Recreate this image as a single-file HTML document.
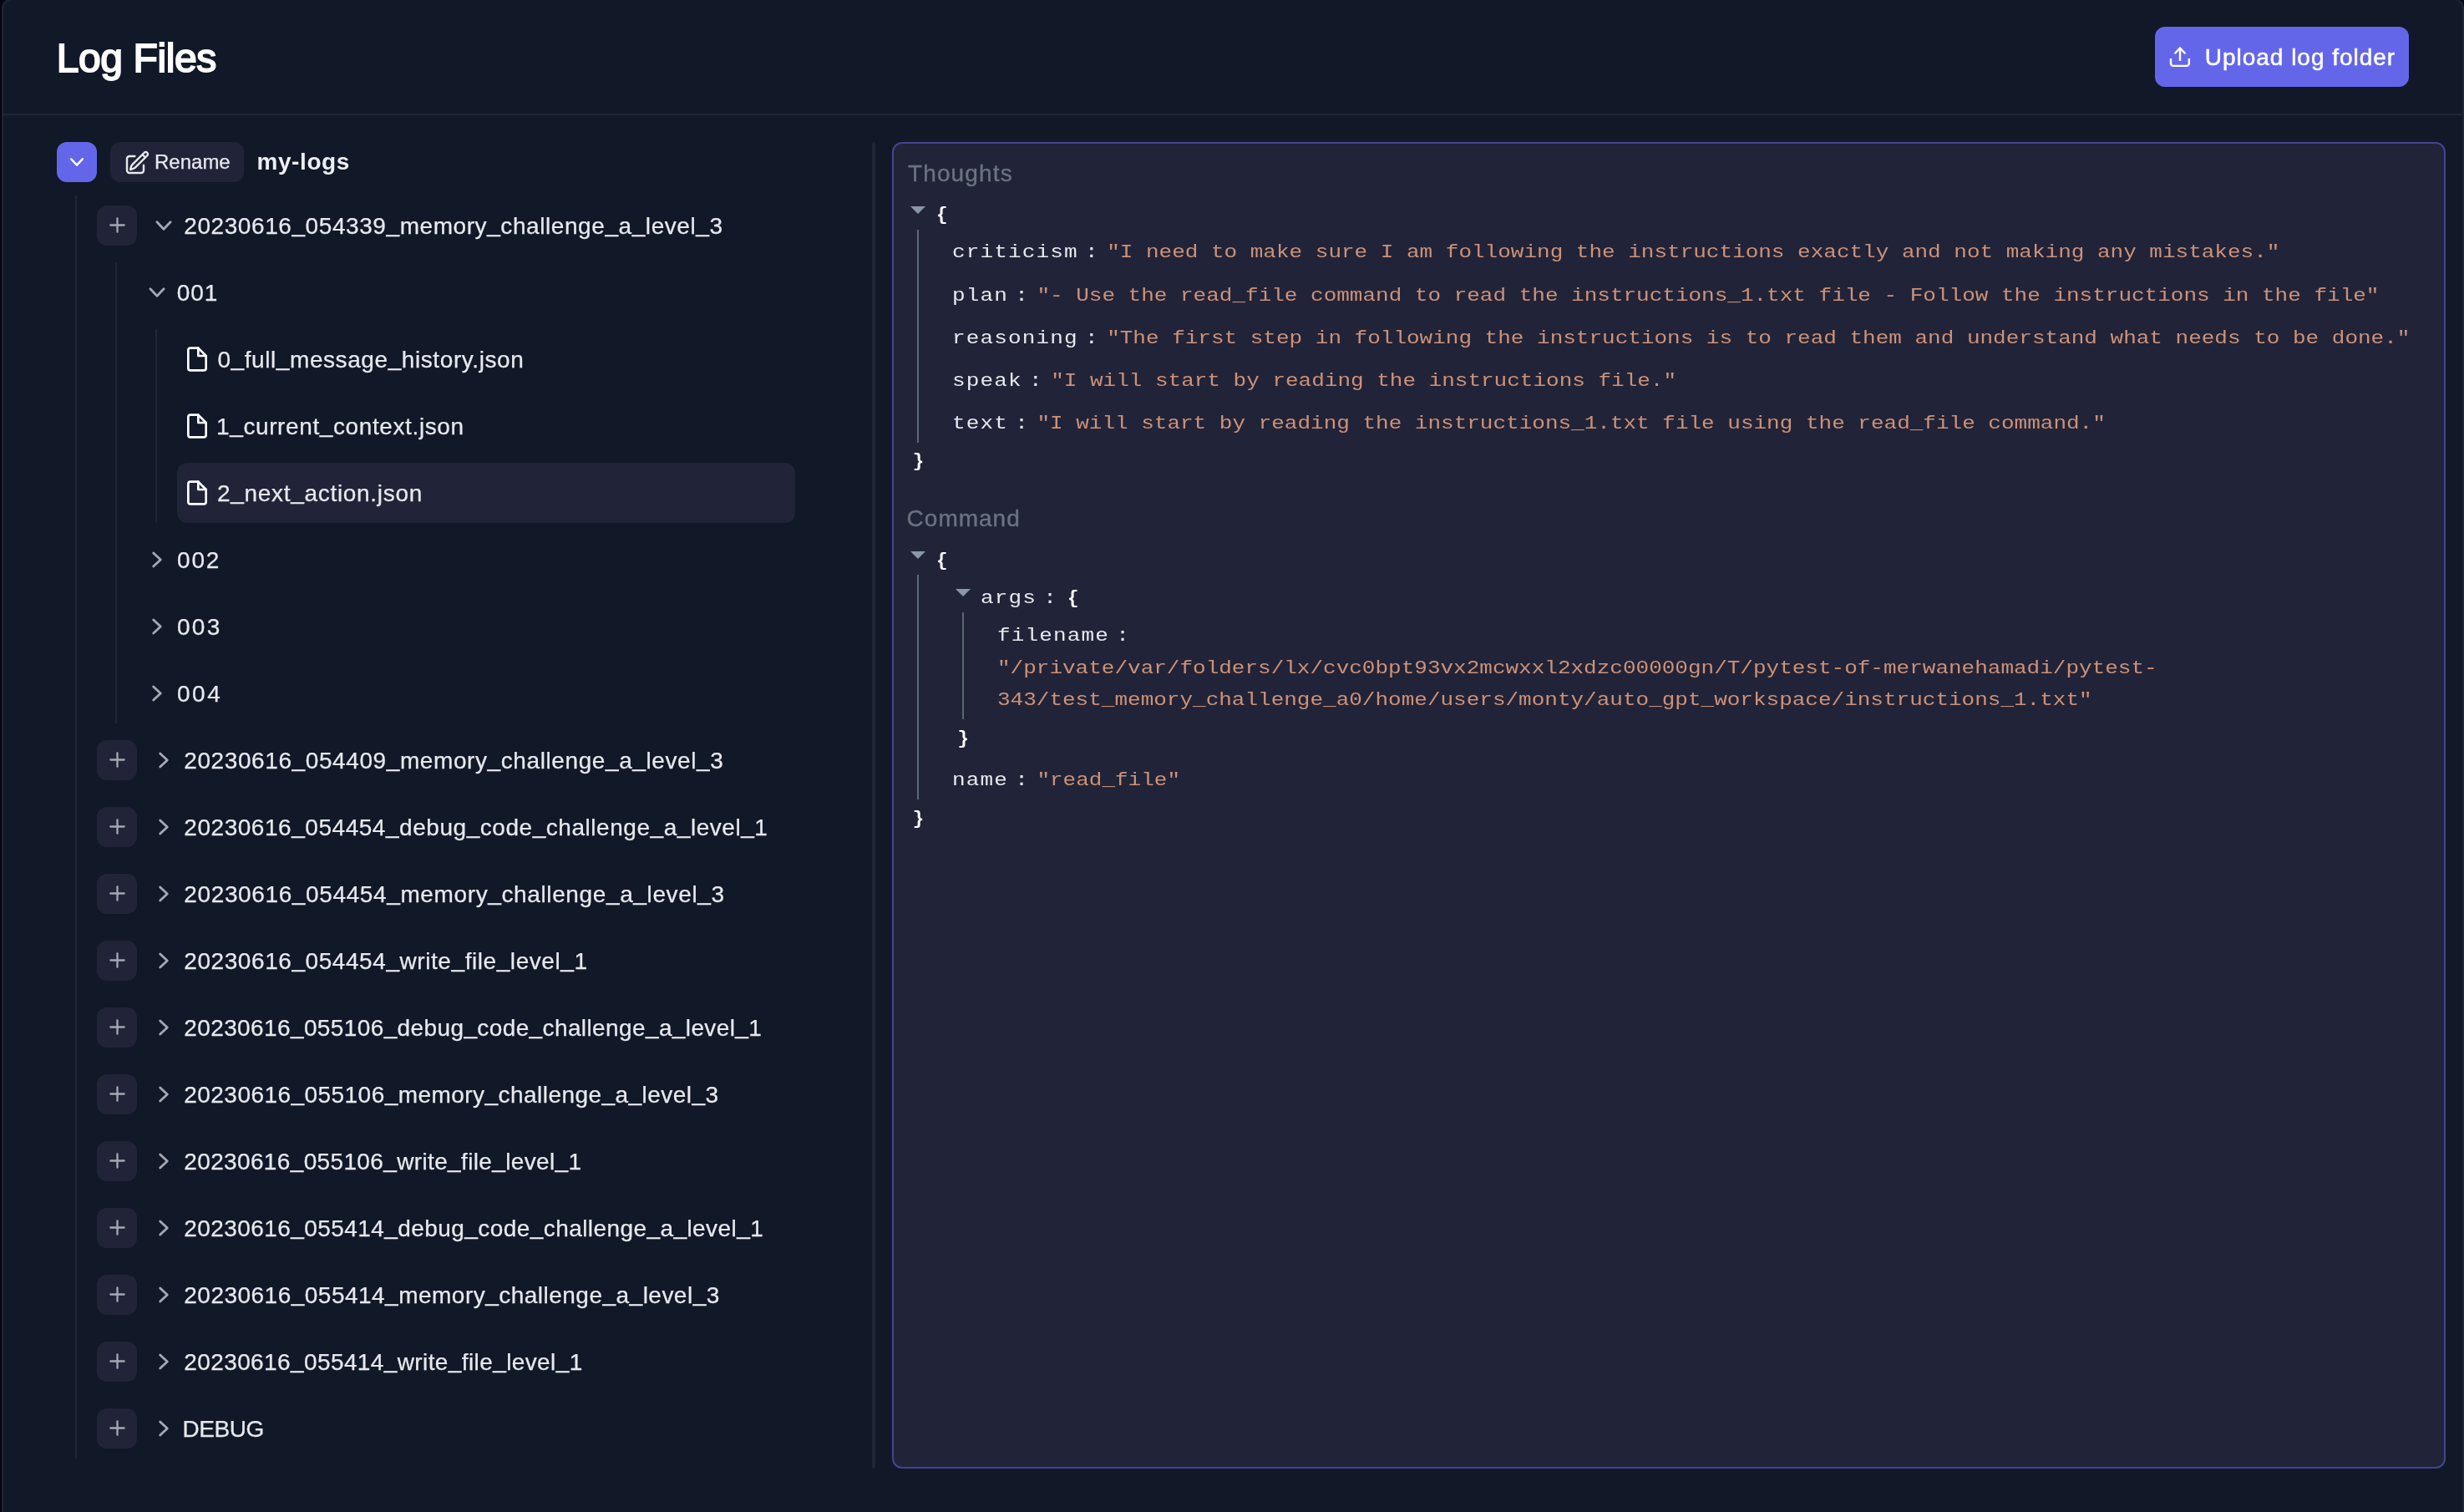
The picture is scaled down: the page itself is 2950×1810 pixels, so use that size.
<!DOCTYPE html>
<html lang="en"><head><meta charset="utf-8"><title>Log Files</title>
<style>
*{box-sizing:border-box;}
html,body{margin:0;padding:0;background:#030512;}
body{width:2950px;height:1810px;position:relative;overflow:hidden;font-family:"Liberation Sans",sans-serif;color:#e7e9ee;}
.abs{position:absolute;}
.win{position:absolute;left:2px;top:-2px;width:2948px;height:1900px;border:2px solid #1e2533;border-radius:12px;background:#111827;}
.hline{position:absolute;left:4px;top:136px;width:2944px;height:2px;background:#1f2635;}
.t{position:absolute;white-space:nowrap;line-height:40px;height:40px;font-size:28px;color:#e7e9ee;-webkit-text-stroke:0.25px #e7e9ee;}
.h1{position:absolute;white-space:nowrap;left:68px;top:39.5px;font-size:48px;line-height:60px;font-weight:normal;color:#fff;-webkit-text-stroke:1.9px #fff;}
.u{position:relative;top:-2.5px;}
.vline{position:absolute;width:2px;background:#1f2635;}
.sq{position:absolute;width:48px;height:48px;border-radius:12px;background:#212438;}
.sel{position:absolute;left:212px;width:740px;height:72px;border-radius:12px;background:#212438;}
.panel{position:absolute;left:1068px;top:170px;width:1860px;height:1588px;border:2px solid #434590;border-radius:12px;background:#212438;}
.m{position:absolute;white-space:pre;font-family:"Liberation Mono",monospace;font-size:22.5px;line-height:39px;height:39px;color:#e7e9ee;transform:scaleX(1.155556);transform-origin:0 0;}
.k{letter-spacing:0.995px;}
.c{display:inline-block;margin:0 9.0px 0 7.23px;}
.s{color:#ce9178;}
.b{font-weight:bold;color:#fff;}
.lab{position:absolute;white-space:nowrap;font-size:28px;line-height:40px;color:#6b7280;-webkit-text-stroke:0.4px #6b7280;}
svg{position:absolute;overflow:visible;}
</style></head>
<body>
<div id="root" style="position:absolute;left:0;top:0;width:2950px;height:1810px;overflow:hidden;will-change:transform;">
<div class="win"></div>
<div class="hline"></div>
<div class="h1" id="h1" style="letter-spacing:-0.387px;margin-left:-0.30px;">Log Files</div>
<div class="abs" id="upbtn" style="left:2580px;top:32px;width:304px;height:72px;border-radius:12px;background:#6466ea;"></div>
<svg id="upicon" style="left:2590px;top:50px" width="40" height="40" viewBox="2590 50 40 40" fill="none" stroke="#fff" stroke-width="2.4" stroke-linecap="butt" stroke-linejoin="round"><path d="M2599 70.1V75.9a3 3 0 0 0 3 3H2617.8a3 3 0 0 0 3-3V70.1"/><path d="M2610 72.9V57.6"/><path stroke-linejoin="miter" d="M2603.6 64.3L2610 57.5L2616.4 64.3"/></svg>
<div class="t" id="uptxt" style="left:2640px;top:48.5px;color:#fff;-webkit-text-stroke:0.5px #fff;letter-spacing:0.975px;margin-left:-0.20px;">Upload log folder</div>
<div class="sq" style="left:68px;top:170px;background:#6466ea;"></div>
<svg  style="left:76px;top:178px" width="32" height="32" viewBox="0 0 20 20" fill="#fff"><path fill-rule="evenodd" d="M5.23 7.21a.75.75 0 011.06.02L10 11.168l3.71-3.938a.75.75 0 111.08 1.04l-4.25 4.5a.75.75 0 01-1.08 0l-4.25-4.5a.75.75 0 01.02-1.06z" clip-rule="evenodd"/></svg>
<div class="abs" style="left:132px;top:170px;width:160px;height:48px;border-radius:12px;background:#212438;"></div>
<svg id="edicon" style="left:147.5px;top:178.5px" width="32" height="32" viewBox="0 0 24 24" fill="none" stroke="#e7e9ee" stroke-width="1.8" stroke-linecap="round" stroke-linejoin="round"><path d="M16.862 4.487l1.687-1.688a1.875 1.875 0 112.652 2.652L10.582 16.07a4.5 4.5 0 01-1.897 1.13L6 18l.8-2.685a4.5 4.5 0 011.13-1.897l8.932-8.931zm0 0L19.5 7.125M18 14v4.75A2.25 2.25 0 0115.75 21H5.25A2.25 2.25 0 013 18.75V8.25A2.25 2.25 0 015.25 6H10"/></svg>
<div class="t" id="rename" style="left:185px;top:174px;font-size:24px;">Rename</div>
<div class="t" id="mylogs" style="left:308px;top:174px;font-weight:bold;color:#eceef2;-webkit-text-stroke:0;letter-spacing:0.600px;margin-left:-0.60px;">my-logs</div>
<div class="vline" style="left:90px;top:234px;height:1512px;"></div>
<div class="vline" style="left:138px;top:314px;height:552px;"></div>
<div class="vline" style="left:186px;top:394px;height:232px;"></div>
<div class="abs" style="left:1044px;top:170px;width:4px;height:1588px;border-radius:2px;background:#1f2635;"></div>
<div class="sq" style="left:116px;top:246px;"></div>
<svg style="left:124.5px;top:254.2px" width="31" height="31" viewBox="0 0 20 20" fill="#a4a8b4"><path d="M10.75 4.75a.75.75 0 00-1.5 0v4.5h-4.5a.75.75 0 000 1.5h4.5v4.5a.75.75 0 001.5 0v-4.5h4.5a.75.75 0 000-1.5h-4.5v-4.5z"/></svg>
<svg  style="left:177px;top:251px" width="38" height="38" viewBox="0 0 20 20" fill="#a4a8b4"><path fill-rule="evenodd" d="M5.23 7.21a.75.75 0 011.06.02L10 11.168l3.71-3.938a.75.75 0 111.08 1.04l-4.25 4.5a.75.75 0 01-1.08 0l-4.25-4.5a.75.75 0 01.02-1.06z" clip-rule="evenodd"/></svg>
<div class="t l1" id="l1_0" style="left:220px;top:250.5px;letter-spacing:0.572px;margin-left:0.30px;">20230616<span class="u">_</span>054339<span class="u">_</span>memory<span class="u">_</span>challenge<span class="u">_</span>a<span class="u">_</span>level<span class="u">_</span>3</div>
<svg  style="left:169px;top:331px" width="38" height="38" viewBox="0 0 20 20" fill="#a4a8b4"><path fill-rule="evenodd" d="M5.23 7.21a.75.75 0 011.06.02L10 11.168l3.71-3.938a.75.75 0 111.08 1.04l-4.25 4.5a.75.75 0 01-1.08 0l-4.25-4.5a.75.75 0 01.02-1.06z" clip-rule="evenodd"/></svg>
<div class="t l2" id="l2_0" style="left:212px;top:330.5px;letter-spacing:0.900px;margin-left:-0.30px;">001</div>
<svg style="left:220px;top:414px" width="32" height="32" viewBox="0 0 24 24" fill="none" stroke="#fff" stroke-width="2" stroke-linecap="round" stroke-linejoin="round"><path d="M13 2H6a2 2 0 0 0-2 2v16a2 2 0 0 0 2 2h12a2 2 0 0 0 2-2V9z"/><polyline points="13 2 13 9 20 9"/></svg>
<div class="t l3" id="l3_0" style="left:260px;top:410.5px;letter-spacing:0.581px;margin-left:0.40px;">0<span class="u">_</span>full<span class="u">_</span>message<span class="u">_</span>history.json</div>
<svg style="left:220px;top:494px" width="32" height="32" viewBox="0 0 24 24" fill="none" stroke="#fff" stroke-width="2" stroke-linecap="round" stroke-linejoin="round"><path d="M13 2H6a2 2 0 0 0-2 2v16a2 2 0 0 0 2 2h12a2 2 0 0 0 2-2V9z"/><polyline points="13 2 13 9 20 9"/></svg>
<div class="t l3" id="l3_1" style="left:260px;top:490.5px;letter-spacing:0.607px;margin-left:-1.00px;">1<span class="u">_</span>current<span class="u">_</span>context.json</div>
<div class="sel" style="top:554px;"></div>
<svg style="left:220px;top:574px" width="32" height="32" viewBox="0 0 24 24" fill="none" stroke="#fff" stroke-width="2" stroke-linecap="round" stroke-linejoin="round"><path d="M13 2H6a2 2 0 0 0-2 2v16a2 2 0 0 0 2 2h12a2 2 0 0 0 2-2V9z"/><polyline points="13 2 13 9 20 9"/></svg>
<div class="t l3" id="l3_2" style="left:260px;top:570.5px;letter-spacing:0.691px;margin-left:0.00px;">2<span class="u">_</span>next<span class="u">_</span>action.json</div>
<svg style="left:169px;top:651px" width="38" height="38" viewBox="0 0 20 20" fill="#a4a8b4"><path fill-rule="evenodd" d="M7.21 14.77a.75.75 0 01.02-1.06L11.168 10 7.23 6.29a.75.75 0 111.04-1.08l4.5 4.25a.75.75 0 010 1.08l-4.5 4.25a.75.75 0 01-1.06-.02z" clip-rule="evenodd"/></svg>
<div class="t l2" id="l2_1" style="left:212px;top:650.5px;letter-spacing:1.850px;margin-left:0.00px;">002</div>
<svg style="left:169px;top:731px" width="38" height="38" viewBox="0 0 20 20" fill="#a4a8b4"><path fill-rule="evenodd" d="M7.21 14.77a.75.75 0 01.02-1.06L11.168 10 7.23 6.29a.75.75 0 111.04-1.08l4.5 4.25a.75.75 0 010 1.08l-4.5 4.25a.75.75 0 01-1.06-.02z" clip-rule="evenodd"/></svg>
<div class="t l2" id="l2_2" style="left:212px;top:730.5px;letter-spacing:2.250px;margin-left:0.00px;">003</div>
<svg style="left:169px;top:811px" width="38" height="38" viewBox="0 0 20 20" fill="#a4a8b4"><path fill-rule="evenodd" d="M7.21 14.77a.75.75 0 01.02-1.06L11.168 10 7.23 6.29a.75.75 0 111.04-1.08l4.5 4.25a.75.75 0 010 1.08l-4.5 4.25a.75.75 0 01-1.06-.02z" clip-rule="evenodd"/></svg>
<div class="t l2" id="l2_3" style="left:212px;top:810.5px;letter-spacing:2.500px;margin-left:0.00px;">004</div>
<div class="sq" style="left:116px;top:886px;"></div>
<svg style="left:124.5px;top:894.2px" width="31" height="31" viewBox="0 0 20 20" fill="#a4a8b4"><path d="M10.75 4.75a.75.75 0 00-1.5 0v4.5h-4.5a.75.75 0 000 1.5h4.5v4.5a.75.75 0 001.5 0v-4.5h4.5a.75.75 0 000-1.5h-4.5v-4.5z"/></svg>
<svg style="left:177px;top:891px" width="38" height="38" viewBox="0 0 20 20" fill="#a4a8b4"><path fill-rule="evenodd" d="M7.21 14.77a.75.75 0 01.02-1.06L11.168 10 7.23 6.29a.75.75 0 111.04-1.08l4.5 4.25a.75.75 0 010 1.08l-4.5 4.25a.75.75 0 01-1.06-.02z" clip-rule="evenodd"/></svg>
<div class="t l1" id="l1_1" style="left:220px;top:890.5px;letter-spacing:0.590px;margin-left:0.30px;">20230616<span class="u">_</span>054409<span class="u">_</span>memory<span class="u">_</span>challenge<span class="u">_</span>a<span class="u">_</span>level<span class="u">_</span>3</div>
<div class="sq" style="left:116px;top:966px;"></div>
<svg style="left:124.5px;top:974.2px" width="31" height="31" viewBox="0 0 20 20" fill="#a4a8b4"><path d="M10.75 4.75a.75.75 0 00-1.5 0v4.5h-4.5a.75.75 0 000 1.5h4.5v4.5a.75.75 0 001.5 0v-4.5h4.5a.75.75 0 000-1.5h-4.5v-4.5z"/></svg>
<svg style="left:177px;top:971px" width="38" height="38" viewBox="0 0 20 20" fill="#a4a8b4"><path fill-rule="evenodd" d="M7.21 14.77a.75.75 0 01.02-1.06L11.168 10 7.23 6.29a.75.75 0 111.04-1.08l4.5 4.25a.75.75 0 010 1.08l-4.5 4.25a.75.75 0 01-1.06-.02z" clip-rule="evenodd"/></svg>
<div class="t l1" id="l1_2" style="left:220px;top:970.5px;letter-spacing:0.538px;margin-left:0.30px;">20230616<span class="u">_</span>054454<span class="u">_</span>debug<span class="u">_</span>code<span class="u">_</span>challenge<span class="u">_</span>a<span class="u">_</span>level<span class="u">_</span>1</div>
<div class="sq" style="left:116px;top:1046px;"></div>
<svg style="left:124.5px;top:1054.2px" width="31" height="31" viewBox="0 0 20 20" fill="#a4a8b4"><path d="M10.75 4.75a.75.75 0 00-1.5 0v4.5h-4.5a.75.75 0 000 1.5h4.5v4.5a.75.75 0 001.5 0v-4.5h4.5a.75.75 0 000-1.5h-4.5v-4.5z"/></svg>
<svg style="left:177px;top:1051px" width="38" height="38" viewBox="0 0 20 20" fill="#a4a8b4"><path fill-rule="evenodd" d="M7.21 14.77a.75.75 0 01.02-1.06L11.168 10 7.23 6.29a.75.75 0 111.04-1.08l4.5 4.25a.75.75 0 010 1.08l-4.5 4.25a.75.75 0 01-1.06-.02z" clip-rule="evenodd"/></svg>
<div class="t l1" id="l1_3" style="left:220px;top:1050.5px;letter-spacing:0.621px;margin-left:0.30px;">20230616<span class="u">_</span>054454<span class="u">_</span>memory<span class="u">_</span>challenge<span class="u">_</span>a<span class="u">_</span>level<span class="u">_</span>3</div>
<div class="sq" style="left:116px;top:1126px;"></div>
<svg style="left:124.5px;top:1134.2px" width="31" height="31" viewBox="0 0 20 20" fill="#a4a8b4"><path d="M10.75 4.75a.75.75 0 00-1.5 0v4.5h-4.5a.75.75 0 000 1.5h4.5v4.5a.75.75 0 001.5 0v-4.5h4.5a.75.75 0 000-1.5h-4.5v-4.5z"/></svg>
<svg style="left:177px;top:1131px" width="38" height="38" viewBox="0 0 20 20" fill="#a4a8b4"><path fill-rule="evenodd" d="M7.21 14.77a.75.75 0 01.02-1.06L11.168 10 7.23 6.29a.75.75 0 111.04-1.08l4.5 4.25a.75.75 0 010 1.08l-4.5 4.25a.75.75 0 01-1.06-.02z" clip-rule="evenodd"/></svg>
<div class="t l1" id="l1_4" style="left:220px;top:1130.5px;letter-spacing:0.567px;margin-left:0.30px;">20230616<span class="u">_</span>054454<span class="u">_</span>write<span class="u">_</span>file<span class="u">_</span>level<span class="u">_</span>1</div>
<div class="sq" style="left:116px;top:1206px;"></div>
<svg style="left:124.5px;top:1214.2px" width="31" height="31" viewBox="0 0 20 20" fill="#a4a8b4"><path d="M10.75 4.75a.75.75 0 00-1.5 0v4.5h-4.5a.75.75 0 000 1.5h4.5v4.5a.75.75 0 001.5 0v-4.5h4.5a.75.75 0 000-1.5h-4.5v-4.5z"/></svg>
<svg style="left:177px;top:1211px" width="38" height="38" viewBox="0 0 20 20" fill="#a4a8b4"><path fill-rule="evenodd" d="M7.21 14.77a.75.75 0 01.02-1.06L11.168 10 7.23 6.29a.75.75 0 111.04-1.08l4.5 4.25a.75.75 0 010 1.08l-4.5 4.25a.75.75 0 01-1.06-.02z" clip-rule="evenodd"/></svg>
<div class="t l1" id="l1_5" style="left:220px;top:1210.5px;letter-spacing:0.382px;margin-left:0.30px;">20230616<span class="u">_</span>055106<span class="u">_</span>debug<span class="u">_</span>code<span class="u">_</span>challenge<span class="u">_</span>a<span class="u">_</span>level<span class="u">_</span>1</div>
<div class="sq" style="left:116px;top:1286px;"></div>
<svg style="left:124.5px;top:1294.2px" width="31" height="31" viewBox="0 0 20 20" fill="#a4a8b4"><path d="M10.75 4.75a.75.75 0 00-1.5 0v4.5h-4.5a.75.75 0 000 1.5h4.5v4.5a.75.75 0 001.5 0v-4.5h4.5a.75.75 0 000-1.5h-4.5v-4.5z"/></svg>
<svg style="left:177px;top:1291px" width="38" height="38" viewBox="0 0 20 20" fill="#a4a8b4"><path fill-rule="evenodd" d="M7.21 14.77a.75.75 0 01.02-1.06L11.168 10 7.23 6.29a.75.75 0 111.04-1.08l4.5 4.25a.75.75 0 010 1.08l-4.5 4.25a.75.75 0 01-1.06-.02z" clip-rule="evenodd"/></svg>
<div class="t l1" id="l1_6" style="left:220px;top:1290.5px;letter-spacing:0.450px;margin-left:0.30px;">20230616<span class="u">_</span>055106<span class="u">_</span>memory<span class="u">_</span>challenge<span class="u">_</span>a<span class="u">_</span>level<span class="u">_</span>3</div>
<div class="sq" style="left:116px;top:1366px;"></div>
<svg style="left:124.5px;top:1374.2px" width="31" height="31" viewBox="0 0 20 20" fill="#a4a8b4"><path d="M10.75 4.75a.75.75 0 00-1.5 0v4.5h-4.5a.75.75 0 000 1.5h4.5v4.5a.75.75 0 001.5 0v-4.5h4.5a.75.75 0 000-1.5h-4.5v-4.5z"/></svg>
<svg style="left:177px;top:1371px" width="38" height="38" viewBox="0 0 20 20" fill="#a4a8b4"><path fill-rule="evenodd" d="M7.21 14.77a.75.75 0 01.02-1.06L11.168 10 7.23 6.29a.75.75 0 111.04-1.08l4.5 4.25a.75.75 0 010 1.08l-4.5 4.25a.75.75 0 01-1.06-.02z" clip-rule="evenodd"/></svg>
<div class="t l1" id="l1_7" style="left:220px;top:1370.5px;letter-spacing:0.355px;margin-left:0.30px;">20230616<span class="u">_</span>055106<span class="u">_</span>write<span class="u">_</span>file<span class="u">_</span>level<span class="u">_</span>1</div>
<div class="sq" style="left:116px;top:1446px;"></div>
<svg style="left:124.5px;top:1454.2px" width="31" height="31" viewBox="0 0 20 20" fill="#a4a8b4"><path d="M10.75 4.75a.75.75 0 00-1.5 0v4.5h-4.5a.75.75 0 000 1.5h4.5v4.5a.75.75 0 001.5 0v-4.5h4.5a.75.75 0 000-1.5h-4.5v-4.5z"/></svg>
<svg style="left:177px;top:1451px" width="38" height="38" viewBox="0 0 20 20" fill="#a4a8b4"><path fill-rule="evenodd" d="M7.21 14.77a.75.75 0 01.02-1.06L11.168 10 7.23 6.29a.75.75 0 111.04-1.08l4.5 4.25a.75.75 0 010 1.08l-4.5 4.25a.75.75 0 01-1.06-.02z" clip-rule="evenodd"/></svg>
<div class="t l1" id="l1_8" style="left:220px;top:1450.5px;letter-spacing:0.427px;margin-left:0.30px;">20230616<span class="u">_</span>055414<span class="u">_</span>debug<span class="u">_</span>code<span class="u">_</span>challenge<span class="u">_</span>a<span class="u">_</span>level<span class="u">_</span>1</div>
<div class="sq" style="left:116px;top:1526px;"></div>
<svg style="left:124.5px;top:1534.2px" width="31" height="31" viewBox="0 0 20 20" fill="#a4a8b4"><path d="M10.75 4.75a.75.75 0 00-1.5 0v4.5h-4.5a.75.75 0 000 1.5h4.5v4.5a.75.75 0 001.5 0v-4.5h4.5a.75.75 0 000-1.5h-4.5v-4.5z"/></svg>
<svg style="left:177px;top:1531px" width="38" height="38" viewBox="0 0 20 20" fill="#a4a8b4"><path fill-rule="evenodd" d="M7.21 14.77a.75.75 0 01.02-1.06L11.168 10 7.23 6.29a.75.75 0 111.04-1.08l4.5 4.25a.75.75 0 010 1.08l-4.5 4.25a.75.75 0 01-1.06-.02z" clip-rule="evenodd"/></svg>
<div class="t l1" id="l1_9" style="left:220px;top:1530.5px;letter-spacing:0.480px;margin-left:0.30px;">20230616<span class="u">_</span>055414<span class="u">_</span>memory<span class="u">_</span>challenge<span class="u">_</span>a<span class="u">_</span>level<span class="u">_</span>3</div>
<div class="sq" style="left:116px;top:1606px;"></div>
<svg style="left:124.5px;top:1614.2px" width="31" height="31" viewBox="0 0 20 20" fill="#a4a8b4"><path d="M10.75 4.75a.75.75 0 00-1.5 0v4.5h-4.5a.75.75 0 000 1.5h4.5v4.5a.75.75 0 001.5 0v-4.5h4.5a.75.75 0 000-1.5h-4.5v-4.5z"/></svg>
<svg style="left:177px;top:1611px" width="38" height="38" viewBox="0 0 20 20" fill="#a4a8b4"><path fill-rule="evenodd" d="M7.21 14.77a.75.75 0 01.02-1.06L11.168 10 7.23 6.29a.75.75 0 111.04-1.08l4.5 4.25a.75.75 0 010 1.08l-4.5 4.25a.75.75 0 01-1.06-.02z" clip-rule="evenodd"/></svg>
<div class="t l1" id="l1_10" style="left:220px;top:1610.5px;letter-spacing:0.392px;margin-left:0.30px;">20230616<span class="u">_</span>055414<span class="u">_</span>write<span class="u">_</span>file<span class="u">_</span>level<span class="u">_</span>1</div>
<div class="sq" style="left:116px;top:1686px;"></div>
<svg style="left:124.5px;top:1694.2px" width="31" height="31" viewBox="0 0 20 20" fill="#a4a8b4"><path d="M10.75 4.75a.75.75 0 00-1.5 0v4.5h-4.5a.75.75 0 000 1.5h4.5v4.5a.75.75 0 001.5 0v-4.5h4.5a.75.75 0 000-1.5h-4.5v-4.5z"/></svg>
<svg style="left:177px;top:1691px" width="38" height="38" viewBox="0 0 20 20" fill="#a4a8b4"><path fill-rule="evenodd" d="M7.21 14.77a.75.75 0 01.02-1.06L11.168 10 7.23 6.29a.75.75 0 111.04-1.08l4.5 4.25a.75.75 0 010 1.08l-4.5 4.25a.75.75 0 01-1.06-.02z" clip-rule="evenodd"/></svg>
<div class="t l1" id="l1_11" style="left:220px;top:1690.5px;letter-spacing:-0.500px;margin-left:-1.40px;">DEBUG</div>
<div class="panel"></div>
<div class="lab" id="lab1" style="left:1086px;top:188px;letter-spacing:1.157px;margin-left:0.90px;">Thoughts</div>
<div class="lab" id="lab2" style="left:1086px;top:601px;letter-spacing:1.000px;margin-left:-0.40px;">Command</div>
<svg style="left:1090px;top:247px" width="18" height="9" viewBox="0 0 18 9"><path d="M0 0h18L9 9z" fill="#8a96ad"/></svg>
<div class="m b" style="left:1120.95px;top:238.10px;transform:none;">{</div>
<div class="abs" style="left:1098px;top:275px;width:2px;height:255px;background:#5d6874;"></div>
<div class="m " id="kv0" style="left:1140px;top:283.40px;"><span class="k">criticism</span><span class="c">:</span><span class="s">"I need to make sure I am following the instructions exactly and not making any mistakes."</span></div>
<div class="m " id="kv1" style="left:1140px;top:334.52px;"><span class="k">plan</span><span class="c">:</span><span class="s">"- Use the read_file command to read the instructions_1.txt file - Follow the instructions in the file"</span></div>
<div class="m " id="kv2" style="left:1140px;top:385.65px;"><span class="k">reasoning</span><span class="c">:</span><span class="s">"The first step in following the instructions is to read them and understand what needs to be done."</span></div>
<div class="m " id="kv3" style="left:1140px;top:436.77px;"><span class="k">speak</span><span class="c">:</span><span class="s">"I will start by reading the instructions file."</span></div>
<div class="m " id="kv4" style="left:1140px;top:487.90px;"><span class="k">text</span><span class="c">:</span><span class="s">"I will start by reading the instructions_1.txt file using the read_file command."</span></div>
<div class="m b" style="left:1092.65px;top:532.50px;transform:none;">}</div>
<svg style="left:1090px;top:660px" width="18" height="9" viewBox="0 0 18 9"><path d="M0 0h18L9 9z" fill="#8a96ad"/></svg>
<div class="m b" style="left:1120.95px;top:651.50px;transform:none;">{</div>
<div class="abs" style="left:1098px;top:688px;width:2px;height:269px;background:#5d6874;"></div>
<svg style="left:1144px;top:705px" width="18" height="9" viewBox="0 0 18 9"><path d="M0 0h18L9 9z" fill="#8a96ad"/></svg>
<div class="m "  style="left:1174px;top:696.90px;"><span class="k">args</span><span class="c">:</span></div>
<div class="m b" style="left:1277.95px;top:696.50px;transform:none;">{</div>
<div class="abs" style="left:1152px;top:733px;width:2px;height:128px;background:#5d6874;"></div>
<div class="m "  style="left:1194px;top:741.50px;"><span class="k">filename</span><span class="c">:</span></div>
<div class="m " id="s1" style="left:1194px;top:780.90px;"><span class="s">"/private/var/folders/lx/cvc0bpt93vx2mcwxxl2xdzc00000gn/T/pytest-of-merwanehamadi/pytest-</span></div>
<div class="m " id="s2" style="left:1194px;top:819.30px;"><span class="s">343/test_memory_challenge_a0/home/users/monty/auto_gpt_workspace/instructions_1.txt"</span></div>
<div class="m b" style="left:1146.50px;top:865.00px;transform:none;">}</div>
<div class="m " id="kvname" style="left:1140px;top:915.30px;"><span class="k">name</span><span class="c">:</span><span class="s">"read_file"</span></div>
<div class="m b" style="left:1092.65px;top:961.00px;transform:none;">}</div>
</div>
</body></html>
